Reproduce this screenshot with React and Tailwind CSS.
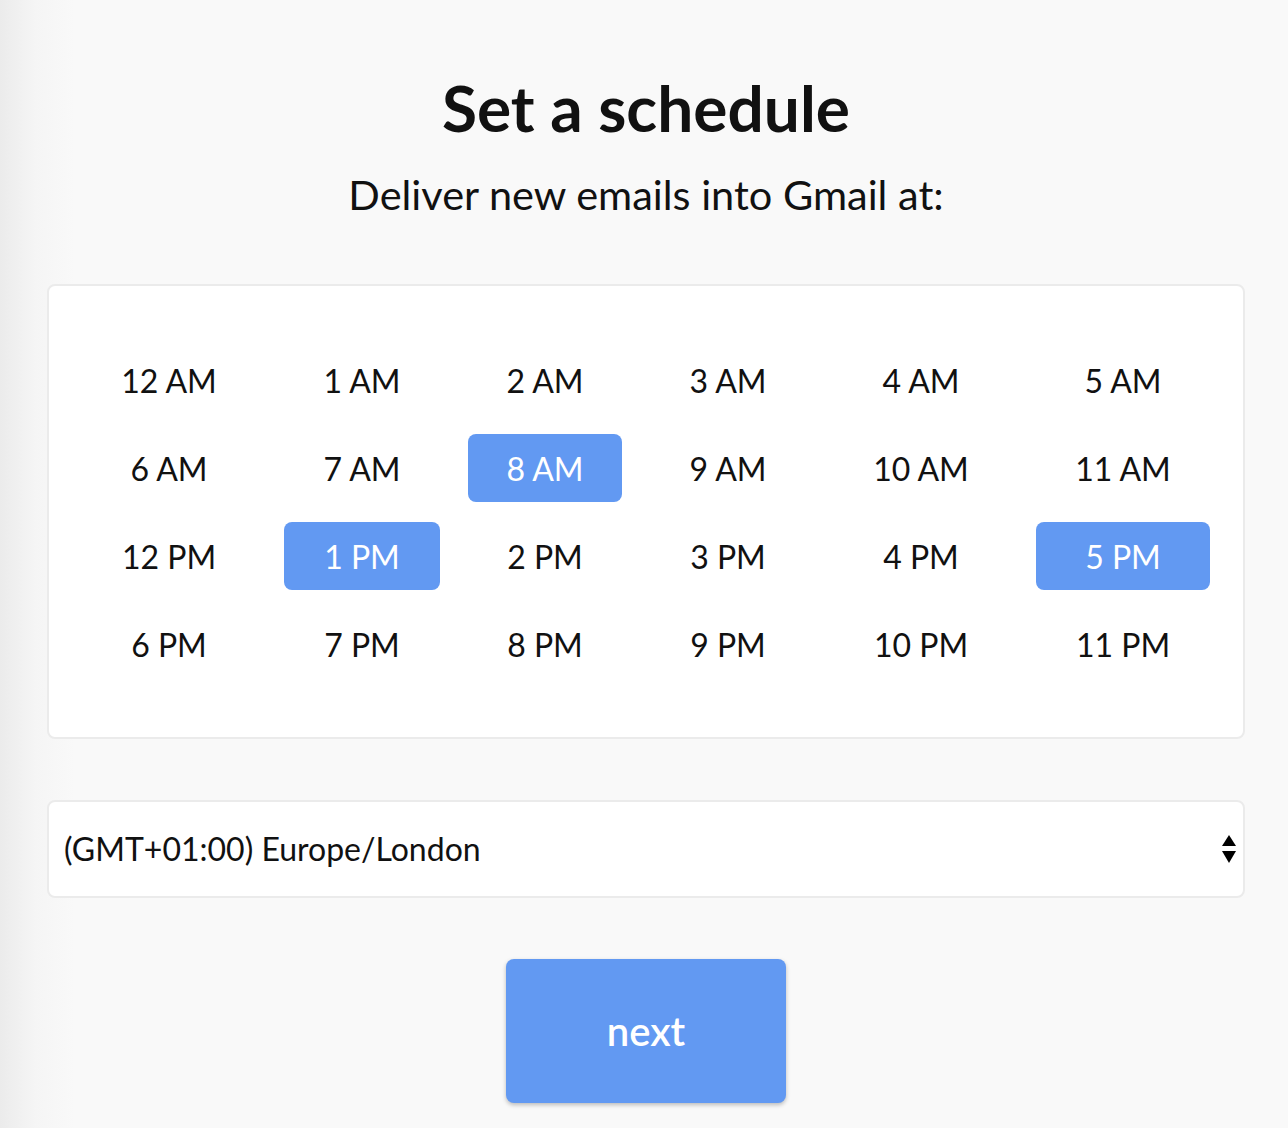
import React from "react";

const rows = [
  ["12 AM", "1 AM", "2 AM", "3 AM", "4 AM", "5 AM"],
  ["6 AM", "7 AM", "8 AM", "9 AM", "10 AM", "11 AM"],
  ["12 PM", "1 PM", "2 PM", "3 PM", "4 PM", "5 PM"],
  ["6 PM", "7 PM", "8 PM", "9 PM", "10 PM", "11 PM"],
];
const selected = ["8 AM", "1 PM", "5 PM"];

export default function App() {
  return (
    <div
      className="min-h-[1128px] w-full bg-[linear-gradient(to_right,#ebebeb_0px,#f5f5f5_35px,#f9f9f9_75px)] text-[#111111]"
      style={{ fontFamily: "Lato, 'Open Sans', sans-serif" }}
    >
      <div className="pl-[47px] pr-[43px] pt-[70px] flex flex-col items-center">
        <h1 className="text-[64px] leading-[76px] font-bold">Set a schedule</h1>
        <p className="mt-[23px] text-[41.5px] leading-[50px]">Deliver new emails into Gmail at:</p>

        <div className="mt-[65px] w-full h-[455px] bg-white border-2 border-[#ebebeb] rounded-[8px] flex items-center justify-center">
          <div className="grid grid-cols-[174px_156px_154px_156px_174px_174px] gap-x-[28px] gap-y-[20px] pt-[1px]">
            {rows.flat().map((t) => {
              const on = selected.includes(t);
              return (
                <div
                  key={t}
                  className={
                    "h-[68px] flex items-center justify-center rounded-[8px] text-[32px] pt-[2px] " +
                    (on ? "bg-[#6299f2] text-white" : "text-[#111111]")
                  }
                >
                  {t}
                </div>
              );
            })}
          </div>
        </div>

        <div className="mt-[61px] w-full h-[98px] bg-white border-2 border-[#ebebeb] rounded-[8px] flex items-center justify-between pl-[15px] pr-[7px]">
          <span className="text-[32px]">(GMT+01:00) Europe/London</span>
          <svg width="14" height="28" viewBox="0 0 14 28">
            <polygon points="7,0 14,11 0,11" fill="#000" />
            <polygon points="0,16 14,16 7,28" fill="#000" />
          </svg>
        </div>

        <button className="mt-[61px] w-[280px] h-[144px] bg-[#6299f2] rounded-[8px] shadow-[0_2px_4px_rgba(0,0,0,0.25)] text-white text-[40px] font-semibold">
          next
        </button>
      </div>
    </div>
  );
}
